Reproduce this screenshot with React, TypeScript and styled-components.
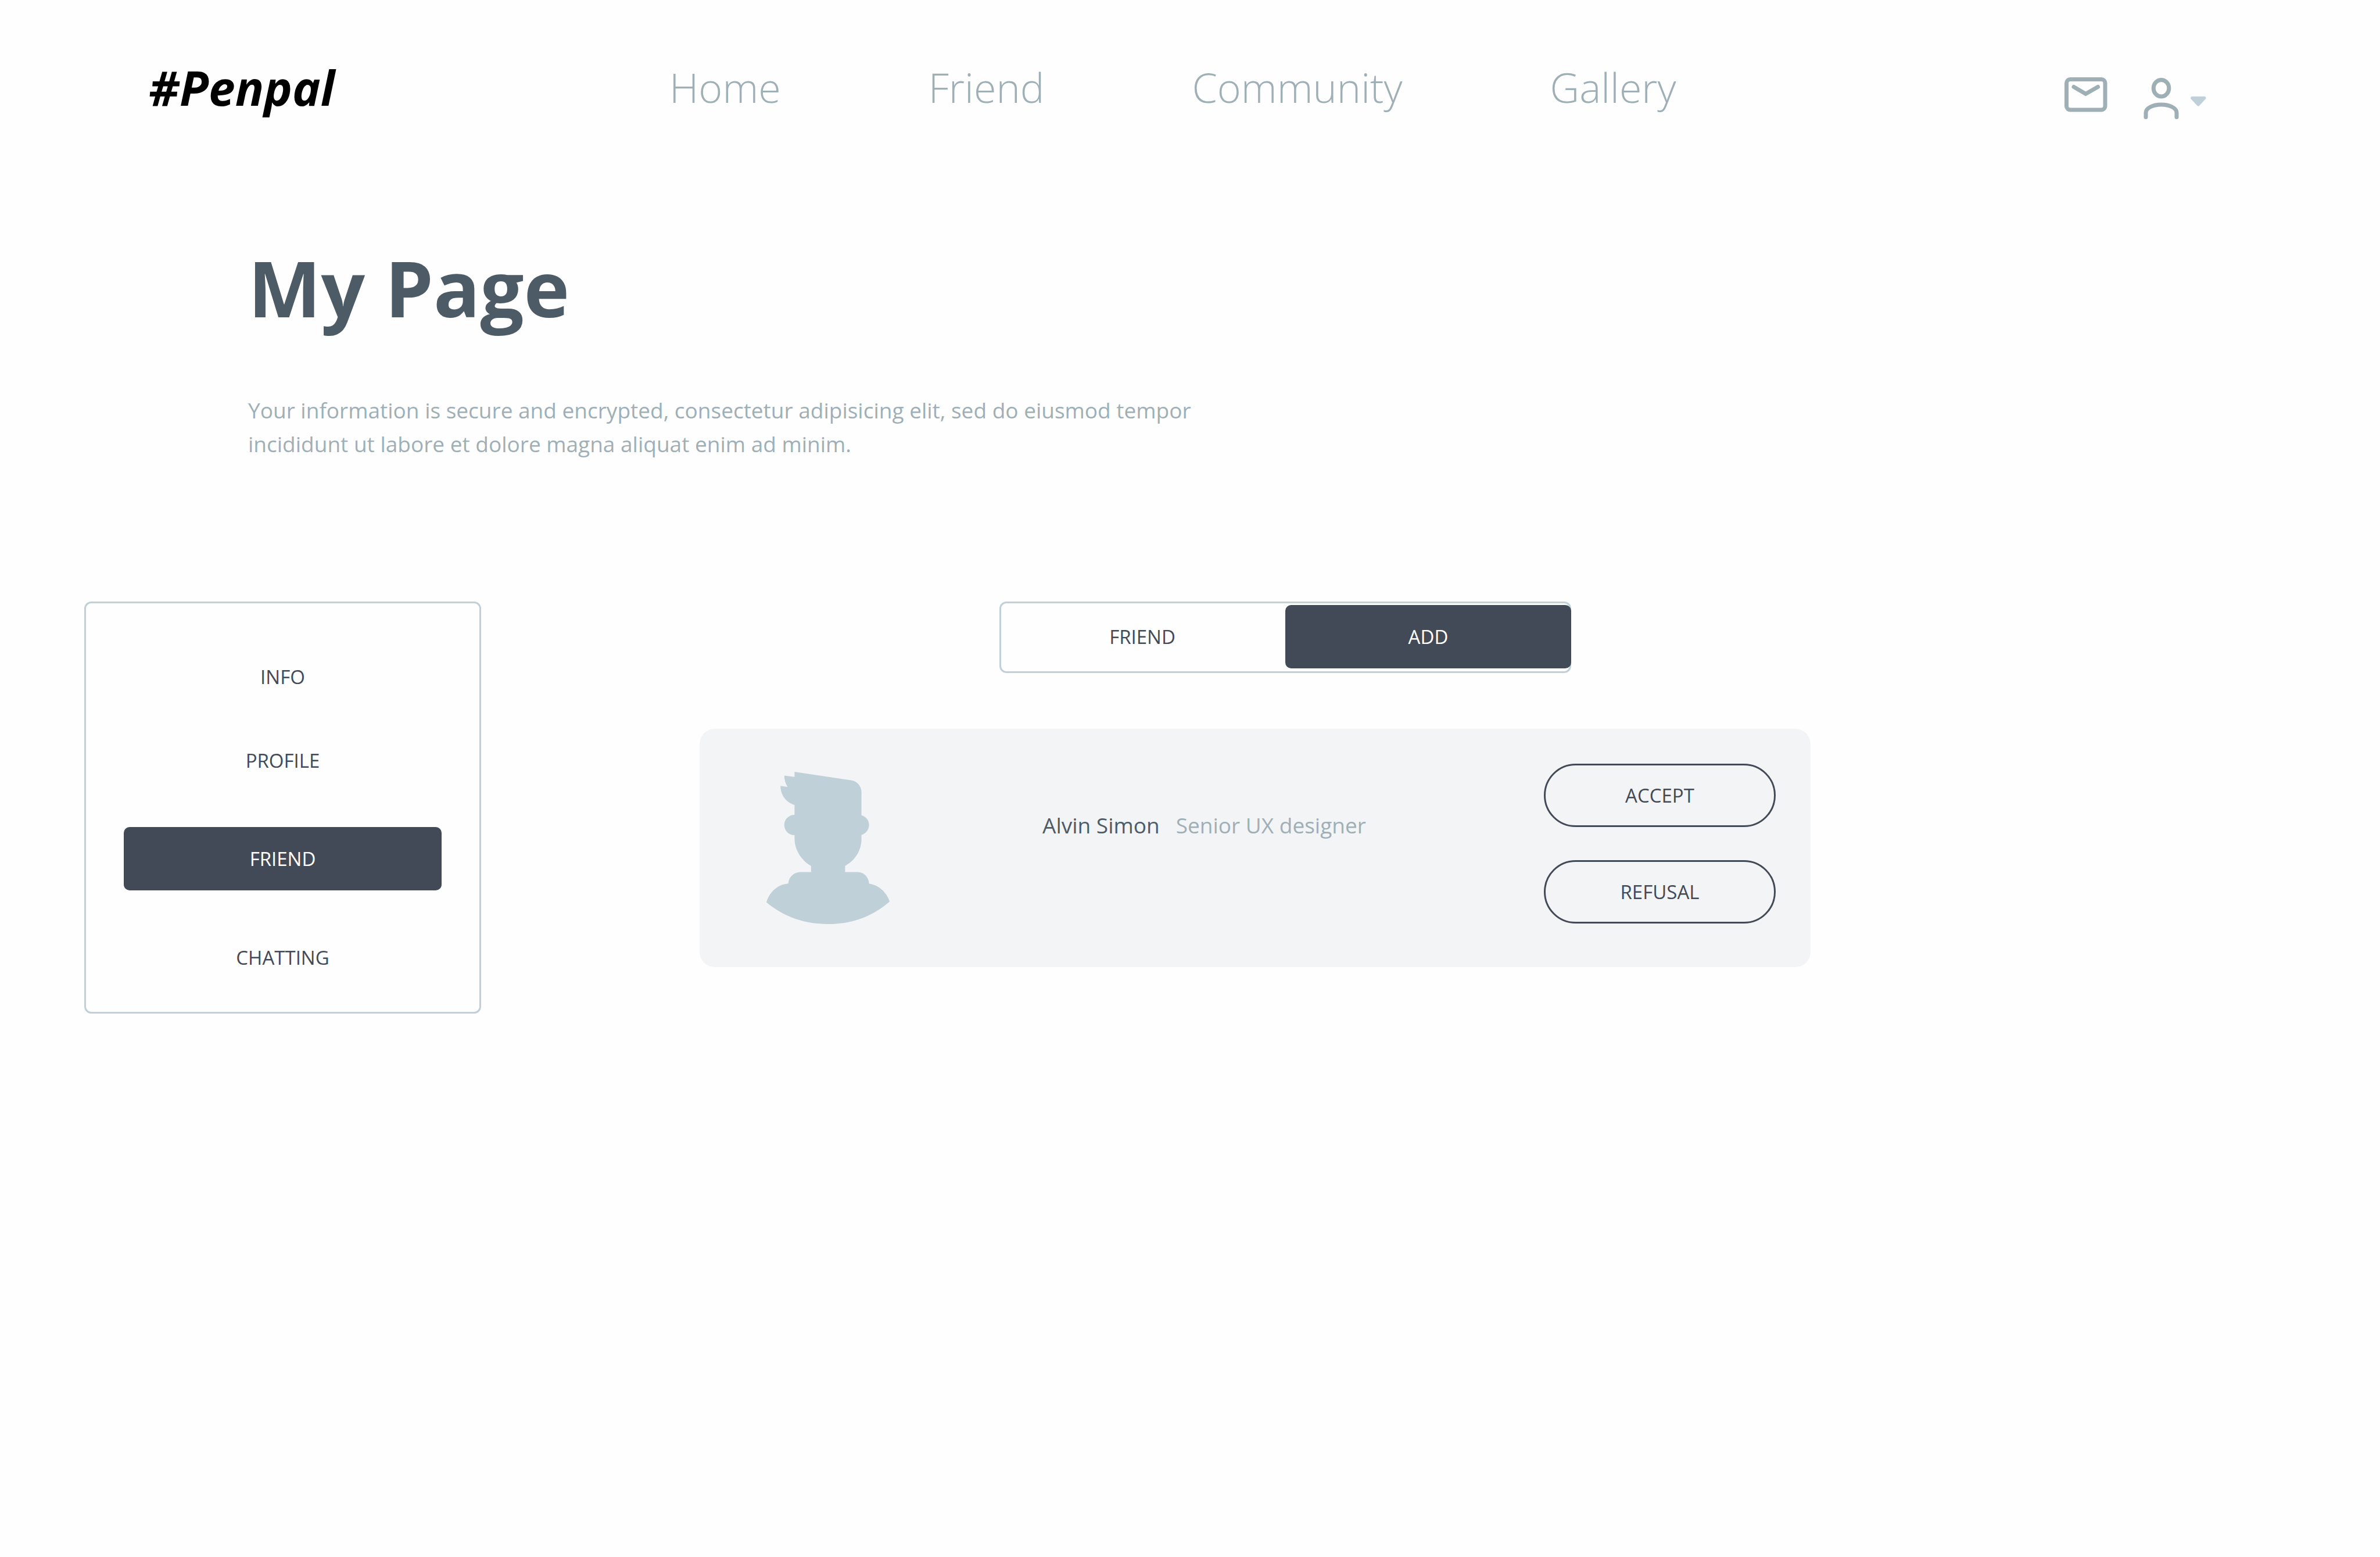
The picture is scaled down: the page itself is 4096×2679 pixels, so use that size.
import React, { useState } from "react";
import styled, { createGlobalStyle } from "styled-components";

const color = {
  page: "#fefefe",
  ink: "#434a57",
  heading: "#4d5b66",
  muted: "#9fafb6",
  line: "#c0d0d9",
  card: "#f3f4f6",
};

const GlobalStyle = createGlobalStyle`
  *, *::before, *::after { box-sizing: border-box; }
  body {
    margin: 0;
    background: ${color.page};
    color: ${color.ink};
    font-family: "Open Sans", "Noto Sans", sans-serif;
  }
  button { font: inherit; color: inherit; cursor: pointer; }
`;

const Header = styled.header`
  display: flex;
  align-items: center;
  height: 300px;
  padding: 0 296px 0 256px;
`;

const Logo = styled.a`
  flex: 0 0 896px;
  color: #000;
  font-size: 82px;
  font-weight: 700;
  font-style: italic;
  text-decoration: none;
`;

const Nav = styled.nav`
  display: flex;
  gap: 254px;
`;

const NavLink = styled.a`
  color: ${color.muted};
  font-size: 70px;
  font-weight: 300;
  text-decoration: none;
`;

const Tools = styled.div`
  display: flex;
  gap: 56px;
  margin: 38px 0 0 auto;
`;

const IconButton = styled.button`
  display: flex;
  gap: 12px;
  padding: 0;
  border: 0;
  background: none;
  color: ${color.muted};

  svg { display: block; }
`;

const Intro = styled.section`
  padding: 105px 427px 0;
`;

const Title = styled.h1`
  margin: 0;
  color: ${color.heading};
  font-size: 133px;
  line-height: 180px;
`;

const Lead = styled.p`
  max-width: 1700px;
  margin: 92px 0 0;
  color: ${color.muted};
  font-size: 37px;
  line-height: 58px;
`;

const Body = styled.main`
  display: grid;
  grid-template-columns: 683px minmax(0, 1912px);
  gap: 376px;
  align-items: start;
  padding: 242px 145px 0;
`;

const Menu = styled.aside`
  display: flex;
  flex-direction: column;
  gap: 86px;
  padding: 97px 65px 65px;
  border: 3px solid ${color.line};
  border-radius: 12px;
`;

const MenuItem = styled.button<{ $active: boolean }>`
  height: ${(p) => (p.$active ? 109 : 58)}px;
  padding: 0;
  border: 0;
  border-radius: 10px;
  background: ${(p) => (p.$active ? color.ink : "transparent")};
  color: ${(p) => (p.$active ? "#fff" : color.ink)};
  font-size: 33px;
`;

const Tabs = styled.div`
  display: grid;
  grid-template-columns: 1fr 1fr;
  max-width: 984px;
  margin-left: 516px;
  padding: 6px 0 8px;
  border-radius: 12px;
  box-shadow: inset 0 0 0 3px ${color.line};
`;

const Tab = styled.button<{ $active: boolean }>`
  height: 109px;
  padding: 0;
  border: 0;
  border-radius: 10px;
  background: ${(p) => (p.$active ? color.ink : "transparent")};
  color: ${(p) => (p.$active ? "#fff" : color.ink)};
  font-size: 33px;
`;

const Card = styled.article`
  display: flex;
  align-items: flex-start;
  margin-top: 96px;
  padding: 60px 60px 74px 115px;
  border-radius: 26px;
  background: ${color.card};
`;

const Portrait = styled.svg`
  display: block;
  width: 212px;
  height: 262px;
  margin-top: 14px;
  fill: ${color.line};
`;

const Person = styled.div`
  display: flex;
  gap: 28px;
  margin: 77px 0 0 263px;
  font-size: 37px;
  line-height: 58px;
`;

const Name = styled.span`
  color: ${color.heading};
`;

const Role = styled.span`
  color: ${color.muted};
`;

const Actions = styled.div`
  display: flex;
  flex-direction: column;
  gap: 57px;
  width: 399px;
  margin-left: auto;
`;

const PillButton = styled.button`
  height: 109px;
  padding: 0;
  border: 3px solid ${color.ink};
  border-radius: 55px;
  background: transparent;
  font-size: 33px;
`;

function MailIcon() {
  return (
    <svg width="80" height="80" viewBox="0 0 80 80" fill="none" stroke="currentColor" strokeWidth="7" strokeLinecap="round" strokeLinejoin="miter">
      <rect x="6.5" y="7.5" width="66.5" height="52.5" rx="6.5" />
      <path d="M19 20.5 39.5 32.5 60.5 20.5" />
    </svg>
  );
}

function UserIcon() {
  return (
    <svg width="68" height="80" viewBox="0 0 68 80" fill="none" stroke="currentColor" strokeWidth="7" strokeLinecap="round">
      <ellipse cx="33.5" cy="22.7" rx="13.3" ry="14.3" />
      <path d="M7 72.5V65C7 57 19 51 33.5 51S60 57 60 65V72.5" />
    </svg>
  );
}

function CaretIcon() {
  return (
    <svg width="34" height="80" viewBox="0 0 34 80" fill={color.line} stroke={color.line} strokeWidth="5" strokeLinejoin="round">
      <path d="M6.5 39.5H28L17.2 51Z" />
    </svg>
  );
}

function Avatar() {
  return (
    <Portrait viewBox="425 301 648 799" preserveAspectRatio="none" role="img" aria-label="Alvin Simon">
      <path d="M573 301 869 345C900 348 925 374 925 407V529C949 536 965 556 965 580S949 624 925 633V655C925 715 890 767 839 795V827H905C938 827 963 853 965 888C1017 895 1057 933 1073 982C980 1062 875 1100 748 1100C630 1100 520 1065 425 986C440 932 485 891 540 887C542 853 570 827 603 827H660V795C608 765 573 710 573 650V633C543 634 519 610 519 580S543 527 573 527V475C530 462 499 424 499 375L536 380C525 362 519 342 519 321L573 328Z" />
    </Portrait>
  );
}

const links = ["Home", "Friend", "Community", "Gallery"];
const menu = ["INFO", "PROFILE", "FRIEND", "CHATTING"];
const tabs = ["FRIEND", "ADD"];

export default function App() {
  const [section, setSection] = useState("FRIEND");
  const [tab, setTab] = useState("ADD");

  return (
    <>
      <GlobalStyle />
      <Header>
        <Logo href="#home">#Penpal</Logo>
        <Nav>
          {links.map((label) => (
            <NavLink key={label} href={`#${label.toLowerCase()}`}>{label}</NavLink>
          ))}
        </Nav>
        <Tools>
          <IconButton type="button" aria-label="Messages"><MailIcon /></IconButton>
          <IconButton type="button" aria-label="Account">
            <UserIcon />
            <CaretIcon />
          </IconButton>
        </Tools>
      </Header>

      <Intro>
        <Title>My Page</Title>
        <Lead>
          Your information is secure and encrypted, consectetur adipisicing elit, sed do eiusmod tempor
          <br />
          incididunt ut labore et dolore magna aliquat enim ad minim.
        </Lead>
      </Intro>

      <Body>
        <Menu>
          {menu.map((label) => (
            <MenuItem key={label} type="button" $active={label === section} onClick={() => setSection(label)}>
              {label}
            </MenuItem>
          ))}
        </Menu>
        <section>
          <Tabs role="tablist">
            {tabs.map((label) => (
              <Tab key={label} type="button" role="tab" aria-selected={label === tab} $active={label === tab} onClick={() => setTab(label)}>
                {label}
              </Tab>
            ))}
          </Tabs>
          <Card>
            <Avatar />
            <Person>
              <Name>Alvin Simon</Name>
              <Role>Senior UX designer</Role>
            </Person>
            <Actions>
              <PillButton type="button">ACCEPT</PillButton>
              <PillButton type="button">REFUSAL</PillButton>
            </Actions>
          </Card>
        </section>
      </Body>
    </>
  );
}
